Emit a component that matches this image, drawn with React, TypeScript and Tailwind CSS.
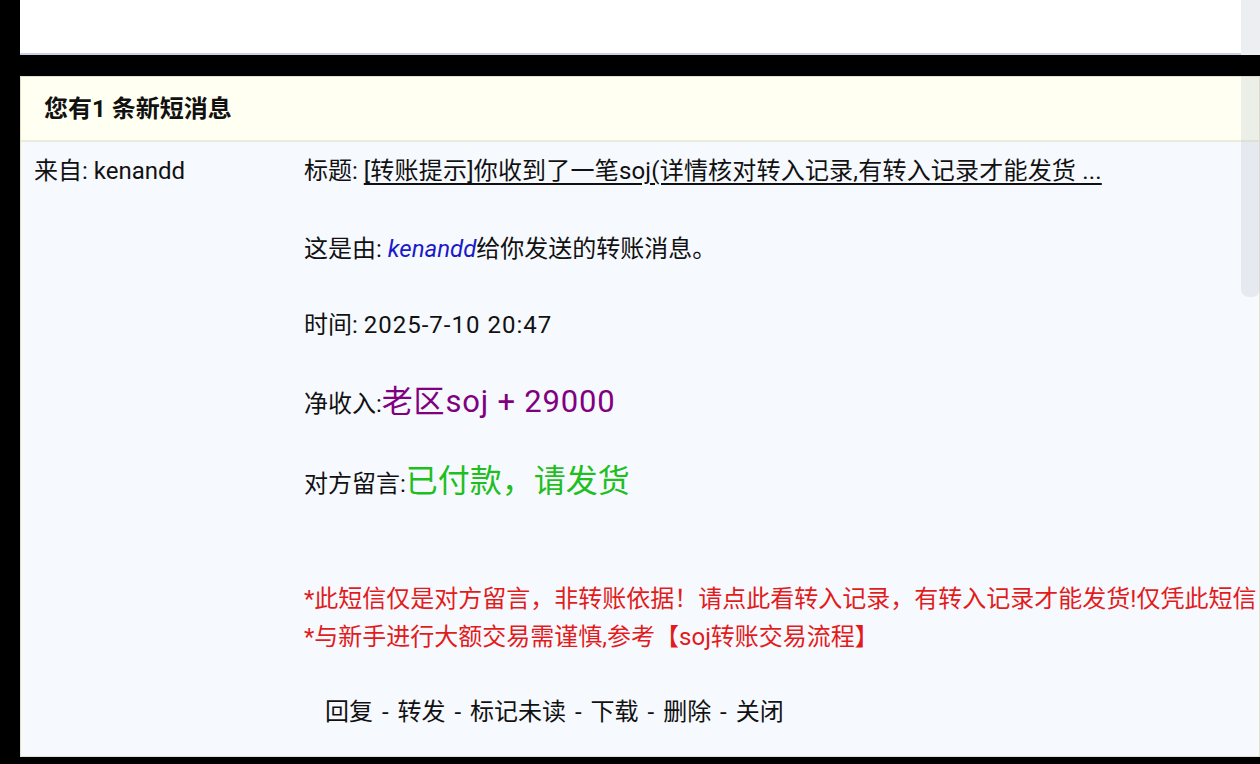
import React from 'react';

const font = { fontFamily: 'Roboto, "Noto Sans CJK SC", "Noto Sans", sans-serif' };

export default function App() {
  return (
    <div
      className="relative w-[1260px] h-[764px] overflow-hidden bg-black pl-[20px] text-[#111] text-[24px]"
      style={font}
    >
      {/* top panel (previous message) */}
      <div className="h-[55px] bg-white border-b-2 border-[#c9d1e2]" />

      {/* message panel */}
      <div className="mt-[21px] h-[681px] border border-[#e2e2c8] bg-[#f6f9fe] flex flex-col">
        <div className="h-[65px] shrink-0 bg-[#fffff2] border-b-2 border-[#e8ecdc] flex items-center pl-[23px] font-bold text-[24px] text-[#111]">
          您有1 条新短消息
        </div>

        <div className="flex flex-1 pt-[11px]">
          <div className="w-[283px] shrink-0 pl-[13px] leading-[36px]">来自: kenandd</div>

          <div className="flex-1 whitespace-nowrap">
            <p className="leading-[36px]">
              标题: <span className="underline underline-offset-[4px] tracking-[0.2px]">[转账提示]你收到了一笔soj(详情核对转入记录,有转入记录才能发货 ...</span>
            </p>
            <p className="mt-[42px] leading-[36px]">
              这是由: <span className="italic text-[#1a1acb]">kenandd</span>给你发送的转账消息。
            </p>
            <p className="mt-[40px] leading-[36px]">
              时间: <span className="tracking-[1px]">2025-7-10 20:47</span>
            </p>
            <p className="mt-[41px] leading-[36px]">
              净收入:<span className="text-[31px] tracking-[0.8px] text-[#800080]">老区soj + 29000</span>
            </p>
            <p className="mt-[41px] leading-[36px]">
              对方留言:<span className="text-[32px] text-[#1fbf1f]">已付款，请发货</span>
            </p>
            <p className="mt-[78px] leading-[38px] text-[#e21c1c]">
              *此短信仅是对方留言，非转账依据！请点此看转入记录，有转入记录才能发货!仅凭此短信
            </p>
            <p className="leading-[38px] text-[#e21c1c]">*与新手进行大额交易需谨慎,参考【soj转账交易流程】</p>
            <p className="mt-[38px] pl-[21px] leading-[36px] [word-spacing:3px]">
              回复 - 转发 - 标记未读 - 下载 - 删除 - 关闭
            </p>
          </div>
        </div>
      </div>

      {/* scrollbar overlay */}
      <div className="absolute right-0 top-0 w-[19px] h-[55px] bg-[#eceef1]" />
      <div className="absolute right-0 top-[76px] w-[19px] h-[221px] rounded-b-[8px] bg-[rgba(200,206,214,0.35)]" />
    </div>
  );
}
